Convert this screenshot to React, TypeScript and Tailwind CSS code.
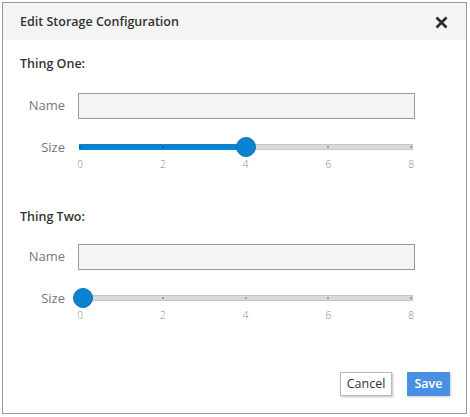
import React from "react";

const TICKS = [0, 2, 4, 6, 8];

function Slider({ value }: { value: number }) {
  const pos = (v: number) => 1 + (v / 8) * 331;
  const thumb = Math.max(pos(value), 3.5);
  return (
    <div className="flex flex-col">
      <div className="relative h-[20px] flex items-center">
        <div className="relative h-[6px] w-full bg-[#d9d9d9] border border-[#c6c6c6]">
          <div className="absolute left-[-1px] top-[-1px] h-[6px] bg-[#0a84d0]" style={{ width: pos(value) + 1 }} />
          {TICKS.map((t) => (
            <div
              key={t}
              className={`absolute top-[1px] w-[2px] h-[2px] rounded-full ${t <= value ? "bg-[#1b4d73]" : "bg-[#8a8a8a]"}`}
              style={{ left: pos(t) - 2 }}
            />
          ))}
        </div>
        <div
          className="absolute top-0 w-[20px] h-[20px] rounded-full bg-[#0a84d0] border border-[#0b74b6]"
          style={{ left: thumb - 10 }}
        />
      </div>
      <div className="relative h-[12px] mt-[1px]">
        {TICKS.map((t) => (
          <span
            key={t}
            className="absolute top-0 w-[20px] text-center text-[10px] font-light leading-[12px] text-[#888]"
            style={{ left: pos(t) - 10 }}
          >
            {t}
          </span>
        ))}
      </div>
    </div>
  );
}

function Thing({ title, value, mt, gap }: { title: string; value: number; mt: string; gap: string }) {
  return (
    <div className={`flex flex-col ${mt}`}>
      <div className="h-[18px] leading-[18px] text-[12.5px] font-semibold text-[#333]">{title}</div>
      <div className={`grid grid-cols-[45px_1fr] gap-x-[13px] items-center ${gap}`}>
        <div className="text-right text-[13px] text-[#777]">Name</div>
        <div className="h-[26px] bg-[#f4f4f4] border border-[#999]" />
      </div>
      <div className="grid grid-cols-[45px_1fr] gap-x-[14px] mt-[18px]">
        <div className="text-right text-[13px] text-[#777] leading-[20px]">Size</div>
        <div className="w-[334px]">
          <Slider value={value} />
        </div>
      </div>
    </div>
  );
}

export default function App() {
  return (
    <div className="w-[470px] h-[417px] bg-white p-[2px]" style={{ fontFamily: "'Open Sans', sans-serif" }}>
      <div className="w-[465px] h-[412px] border border-[#999] flex flex-col">
        <div className="h-[37px] bg-[#f4f4f4] flex items-center justify-between pl-[17px] pr-[18px]">
          <span className="text-[12.5px] font-semibold text-[#333] mt-[1px]">Edit Storage Configuration</span>
          <svg width="13" height="13" viewBox="0 0 13 13" className="mt-[1px]">
            <path d="M1.5 1.5 L11.5 11.5 M11.5 1.5 L1.5 11.5" stroke="#2b2b2b" strokeWidth="2.6" strokeLinecap="butt" />
          </svg>
        </div>
        <div className="flex flex-col pl-[17px] pr-[51px] pt-[15px]">
          <Thing title="Thing One:" value={4} mt="" gap="mt-[20px]" />
          <Thing title="Thing Two:" value={0} mt="mt-[38px]" gap="mt-[18px]" />
        </div>
        <div className="mt-auto flex justify-end gap-[15px] pr-[16px] pb-[17px]">
          <button className="h-[24px] w-[52px] bg-white border border-[#bbb] shadow-[1px_1px_2px_rgba(0,0,0,0.25)] text-[12.5px] text-[#333]">
            Cancel
          </button>
          <button className="h-[24px] w-[43px] bg-[#4a90e2] text-[12.5px] font-semibold text-white shadow-[1px_1px_2px_rgba(0,0,0,0.2)]">
            Save
          </button>
        </div>
      </div>
    </div>
  );
}
